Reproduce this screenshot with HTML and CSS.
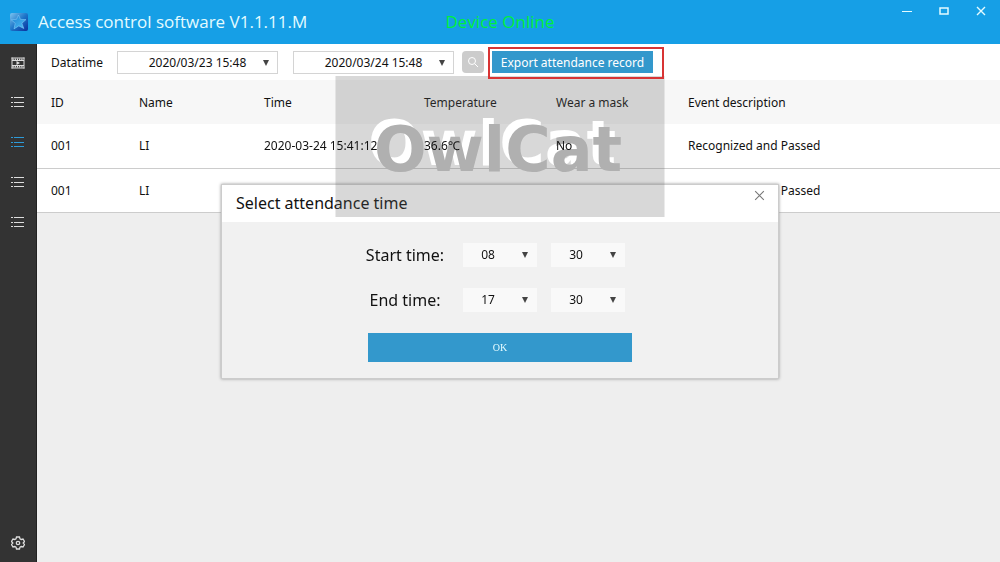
FILE: index.html
```
<!DOCTYPE html>
<html lang="en">
<head>
    <meta charset="UTF-8">
    <meta name="viewport" content="width=device-width, initial-scale=1.0">
    <title>Access control software</title>
    <link rel="stylesheet" href="styles.css">
</head>
<body>

<header class="titlebar">
    <div class="brand">
        <svg class="logo" viewBox="0 0 20 20" aria-hidden="true">
            <defs>
                <linearGradient id="tile" x1="0" y1="0" x2="1" y2="1">
                    <stop offset="0" stop-color="#7cc4f0"/>
                    <stop offset="0.5" stop-color="#1c74c8"/>
                    <stop offset="1" stop-color="#0a2f9c"/>
                </linearGradient>
                <linearGradient id="star" x1="0" y1="0" x2="1" y2="1">
                    <stop offset="0" stop-color="#1d7fd0"/>
                    <stop offset="1" stop-color="#4cc0f8"/>
                </linearGradient>
            </defs>
            <rect x="1" y="1" width="18" height="18" rx="2" fill="url(#tile)"/>
            <path d="M9.5 3l2 4.400 5.500.200-4.100 3.600 1.900 5.300-5-2.600-4.800 3 1.200-5.600L2.300 7.800l5.200-.5z" fill="url(#star)" stroke="#8fd3fa" stroke-width="0.500"/>
        </svg>
        <h1>Access control software V1.1.11.M</h1>
    </div>
    <div class="status">Device Online</div>
    <div class="window-buttons">
        <button type="button" aria-label="Minimize">
            <svg viewBox="0 0 12 12"><path d="M1 6.500h10"/></svg>
        </button>
        <button type="button" aria-label="Maximize">
            <svg viewBox="0 0 12 12"><path d="M2 3h8v6H2z" stroke-width="1.500"/></svg>
        </button>
        <button type="button" aria-label="Close">
            <svg viewBox="0 0 12 12"><path d="M2 2l8 8M10 2l-8 8" stroke-width="1.400"/></svg>
        </button>
    </div>
</header>

<div class="app">
    <nav class="sidebar">
        <button type="button" aria-label="Video">
            <svg viewBox="0 0 14 12">
                <path d="M1 .5v11M13 .5v11M1 3.500h12M1 8.500h12M.5 1h13M.5 11h13"/>
                <path d="M1.500 2.200h11M1.500 9.800h11" stroke-width="1.500" stroke-dasharray="1.200 1"/>
                <path d="M5.500 4l3.500 2-3.500 2z" fill="currentColor" stroke="none"/>
            </svg>
        </button>
        <button type="button" aria-label="People">
            <svg viewBox="0 0 14 12"><path d="M0 1.500h2M3 1.500h10M0 6.500h2M3 6.500h10M0 10.500h2M3 10.500h10"/></svg>
        </button>
        <button type="button" class="active" aria-label="Records">
            <svg viewBox="0 0 14 12"><path d="M0 1.500h2M3 1.500h10M0 6.500h2M3 6.500h10M0 10.500h2M3 10.500h10"/></svg>
        </button>
        <button type="button" aria-label="Strangers">
            <svg viewBox="0 0 14 12"><path d="M0 1.500h2M3 1.500h10M0 6.500h2M3 6.500h10M0 10.500h2M3 10.500h10"/></svg>
        </button>
        <button type="button" aria-label="Logs">
            <svg viewBox="0 0 14 12"><path d="M0 1.500h2M3 1.500h10M0 6.500h2M3 6.500h10M0 10.500h2M3 10.500h10"/></svg>
        </button>
        <button type="button" class="settings" aria-label="Settings">
            <svg viewBox="0 0 14 14">
                <path d="M5.500 1h3l.5 1.800 1.200.7 1.800-.5 1.500 2.500L12.200 7l1.300 1.500L12 11l-1.800-.5-1.200.7-.5 1.800h-3L5 11.200l-1.200-.7L2 11 .5 8.500 1.800 7 .5 5.500 2 3l1.800.5L5 2.800z" stroke-width="1.300"/>
                <circle cx="7" cy="7" r="1.700" stroke-width="1.300"/>
            </svg>
        </button>
    </nav>

    <main>
        <div class="toolbar">
            <label for="from">Datatime</label>
            <span class="select">
                <select id="from"><option>2020/03/23 15:48</option></select>
            </span>
            <span class="select">
                <select aria-label="To"><option>2020/03/24 15:48</option></select>
            </span>
            <button type="button" class="search" aria-label="Search">
                <svg viewBox="0 0 14 14"><circle cx="6" cy="6" r="3.500"/><path d="M8.700 8.700l3.300 3.300"/></svg>
            </button>
            <div class="highlight">
                <button type="button" class="export">Export attendance record</button>
            </div>
        </div>

        <table>
            <colgroup>
                <col class="col-id"><col class="col-name"><col class="col-time">
                <col class="col-temp"><col class="col-mask"><col>
            </colgroup>
            <thead>
                <tr>
                    <th>ID</th><th>Name</th><th>Time</th><th>Temperature</th><th>Wear a mask</th><th>Event description</th>
                </tr>
            </thead>
            <tbody>
                <tr>
                    <td>001</td>
                    <td>LI</td>
                    <td><span class="over">2020-03-24 15:41:12</span></td>
                    <td><span class="over">36.6℃</span></td>
                    <td><span class="over">No</span></td>
                    <td>Recognized and Passed</td>
                </tr>
                <tr>
                    <td>001</td>
                    <td>LI</td>
                    <td></td>
                    <td></td>
                    <td></td>
                    <td>Recognized and Passed</td>
                </tr>
            </tbody>
        </table>
    </main>
</div>

<div class="overlay">
    <section class="dialog" role="dialog" aria-labelledby="dialog-title">
        <div class="dialog-header">
            <h2 id="dialog-title">Select attendance time</h2>
            <button type="button" class="close" aria-label="Close">
                <svg viewBox="0 0 12 12"><path d="M2 2l8 8M10 2l-8 8"/></svg>
            </button>
        </div>
        <form class="dialog-body">
            <div class="time-row">
                <label for="start-hour">Start time:</label>
                <span class="select small"><select id="start-hour"><option>08</option></select></span>
                <span class="select small"><select aria-label="Start minute"><option>30</option></select></span>
            </div>
            <div class="time-row">
                <label for="end-hour">End time:</label>
                <span class="select small"><select id="end-hour"><option>17</option></select></span>
                <span class="select small"><select aria-label="End minute"><option>30</option></select></span>
            </div>
            <button type="button" class="ok">OK</button>
        </form>
    </section>
</div>

<div class="watermark">OwlCat</div>

</body>
</html>
```

FILE: styles.css
```
* {
    box-sizing: border-box;
}

body {
    display: flex;
    flex-direction: column;
    min-height: 100vh;
    margin: 0;
    background-color: #eee;
    color: #111;
    font-family: "Noto Sans", "Noto Sans CJK SC", sans-serif;
    font-size: 12px;
}

h1, h2 {
    margin: 0;
    font-weight: normal;
}

button, select {
    margin: 0;
    padding: 0;
    border: 0;
    border-radius: 0;
    background: none;
    color: inherit;
    font: inherit;
    cursor: pointer;
}

svg {
    display: block;
    fill: none;
    stroke: currentColor;
}

/* title bar */
.titlebar {
    display: grid;
    grid-template-columns: 1fr auto 1fr;
    align-items: center;
    height: 44px;
    background-color: #169fe6;
    color: #e4fbff;
}

.brand {
    display: flex;
    align-items: center;
    gap: 9px;
    padding-left: 9px;
}

.logo {
    width: 20px;
    height: 20px;
    stroke: none;
}

h1, .status {
    font-family: "Open Sans", sans-serif;
    font-size: 17px;
    line-height: 24px;
    white-space: nowrap;
}

.status {
    color: #00f03c;
}

.window-buttons {
    display: flex;
    align-self: start;
    justify-content: flex-end;
    gap: 12px;
    padding-right: 7px;
}

.window-buttons button {
    display: grid;
    place-items: center;
    width: 25px;
    height: 22px;
}

.window-buttons svg {
    width: 12px;
    height: 12px;
}

/* layout */
.app {
    display: flex;
    flex: 1;
}

.sidebar {
    display: flex;
    flex-direction: column;
    width: 37px;
    background-color: #333;
    border-right: 1px solid #222;
    color: #ddd;
}

.sidebar button {
    display: grid;
    place-items: center;
    height: 40px;
}

.sidebar button:first-child {
    height: 38px;
}

.sidebar .active {
    color: #2e9bd8;
}

.sidebar .settings {
    height: 38px;
    margin-top: auto;
}

.sidebar svg {
    width: 14px;
}

main {
    flex: 1;
}

.toolbar {
    display: flex;
    align-items: center;
    height: 36px;
    padding-left: 14px;
    background-color: #fff;
}

.toolbar label {
    width: 66px;
}

/* drop-downs */
.select {
    position: relative;
    display: block;
    width: 161px;
    height: 23px;
    margin-right: 15px;
}

.select select {
    width: 100%;
    height: 100%;
    border: 1px solid #d4d4d4;
    appearance: none;
    background-color: #fff;
    text-align-last: center;
}

.select::after {
    content: "";
    position: absolute;
    top: 9px;
    right: 9px;
    border: solid transparent;
    border-width: 6px 3px 0;
    border-top-color: #444;
    pointer-events: none;
}

.search {
    display: grid;
    place-items: center;
    width: 22px;
    height: 22px;
    margin-left: -7px;
    margin-right: 4px;
    border-radius: 4px;
    background-color: #ccc;
    color: #fff;
}

.search svg {
    width: 14px;
}

.highlight {
    position: relative;
    z-index: 4;
    margin-top: 2px;
    padding: 2px 9px 4px 2px;
    border: 2px solid #d83434;
}

.export {
    display: block;
    width: 161px;
    height: 22px;
    background-color: #3398cc;
    color: #fff;
}

/* records */
table {
    width: 100%;
    border-collapse: collapse;
    table-layout: fixed;
}

th, td {
    height: 44px;
    padding: 0 0 0 14px;
    font-weight: normal;
    text-align: left;
}

th {
    background-color: #f7f7f7;
}

td {
    background-color: #fff;
    border-bottom: 1px solid #ccc;
}

.col-id {
    width: 88px;
}

.col-name {
    width: 125px;
}

.col-time {
    width: 160px;
}

.col-temp, .col-mask {
    width: 132px;
}

.over {
    position: relative;
    z-index: 4;
}

/* dialog */
.overlay {
    position: fixed;
    inset: 0;
    z-index: 2;
    display: grid;
    place-items: center;
}

.dialog {
    width: 558px;
    border: 1px solid #ccc;
    background-color: #f1f1f1;
    box-shadow: 0 0 3px #999;
}

.dialog-header {
    display: flex;
    justify-content: space-between;
    height: 37px;
    padding: 0 12px 0 14px;
    background-color: #fff;
}

h2 {
    font-size: 16px;
    line-height: 37px;
}

.close {
    align-self: flex-start;
    margin-top: 4px;
    color: #777;
}

.close svg {
    width: 13px;
}

.dialog-body {
    display: flex;
    flex-direction: column;
    align-items: center;
    gap: 21px;
    padding: 21px 0 16px;
}

.time-row {
    display: flex;
    align-items: center;
    width: 270px;
}

.time-row label {
    width: 80px;
    margin-right: 18px;
    font-size: 16px;
    line-height: 24px;
    text-align: center;
    white-space: nowrap;
}

.small {
    width: 74px;
    height: 24px;
    margin-right: 14px;
}

.small:last-child {
    margin-right: 0;
}

.small select {
    padding-right: 24px;
    border: 0;
    background-color: #f9f9f9;
}

.ok {
    width: 264px;
    height: 29px;
    background-color: #3398cc;
    color: #e4fbff;
    font-family: "Liberation Serif", serif;
    font-size: 10px;
}

/* watermark over the records and the dialog */
.watermark {
    position: absolute;
    top: 76px;
    left: 50%;
    z-index: 3;
    width: 329px;
    height: 141px;
    padding-right: 4px;
    transform: translateX(-50%);
    background-color: rgba(100, 100, 100, 0.25);
    color: #b0b0b0;
    font: bold 62px/148px "DejaVu Sans", sans-serif;
    text-align: center;
    text-shadow: -6px -6px #fff;
    pointer-events: none;
}
```
